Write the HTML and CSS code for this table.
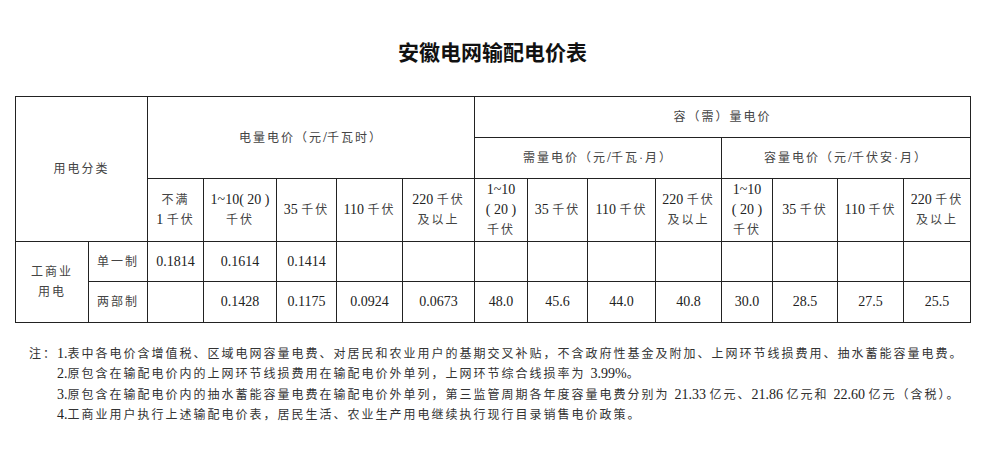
FILE: index.html
```html
<!DOCTYPE html>
<html lang="zh-CN">
<head>
<meta charset="utf-8">
<title>安徽电网输配电价表</title>
<link rel="stylesheet" href="styles.css">
</head>
<body>
<div class="page">
  <h1 class="title">安徽电网输配电价表</h1>
  <table class="price">
    <colgroup>
      <col style="width:73px"><col style="width:59px"><col style="width:56px"><col style="width:73px"><col style="width:60px"><col style="width:66px"><col style="width:72px"><col style="width:53px"><col style="width:60px"><col style="width:68px"><col style="width:66px"><col style="width:51px"><col style="width:65px"><col style="width:66px"><col style="width:67px">
    </colgroup>
    <tr class="r1">
      <td rowspan="3" colspan="2">用电分类</td>
      <td rowspan="2" colspan="5">电量电价（元<span class="n">/</span>千瓦时）</td>
      <td colspan="8">容（需）量电价</td>
    </tr>
    <tr class="r2">
      <td colspan="4">需量电价（元<span class="n">/</span>千瓦·月）</td>
      <td colspan="4">容量电价（元<span class="n">/</span>千伏安·月）</td>
    </tr>
    <tr class="r3">
      <td>不满<br><span class="n">1 </span>千伏</td>
      <td><span class="n">1~10( 20 )</span><br>千伏</td>
      <td><span class="n">35 </span>千伏</td>
      <td><span class="n">110 </span>千伏</td>
      <td><span class="n">220 </span>千伏<br>及以上</td>
      <td><span class="n">1~10<br>( 20 )</span><br>千伏</td>
      <td><span class="n">35 </span>千伏</td>
      <td><span class="n">110 </span>千伏</td>
      <td><span class="n">220 </span>千伏<br>及以上</td>
      <td><span class="n">1~10<br>( 20 )</span><br>千伏</td>
      <td><span class="n">35 </span>千伏</td>
      <td><span class="n">110 </span>千伏</td>
      <td><span class="n">220 </span>千伏<br>及以上</td>
    </tr>
    <tr class="r4">
      <td rowspan="2">工商业<br>用电</td>
      <td>单一制</td>
      <td class="num">0.1814</td>
      <td class="num">0.1614</td>
      <td class="num">0.1414</td>
      <td></td><td></td><td></td><td></td><td></td><td></td><td></td><td></td><td></td><td></td>
    </tr>
    <tr class="r5">
      <td>两部制</td>
      <td></td>
      <td class="num">0.1428</td>
      <td class="num">0.1175</td>
      <td class="num">0.0924</td>
      <td class="num">0.0673</td>
      <td class="num">48.0</td>
      <td class="num">45.6</td>
      <td class="num">44.0</td>
      <td class="num">40.8</td>
      <td class="num">30.0</td>
      <td class="num">28.5</td>
      <td class="num">27.5</td>
      <td class="num">25.5</td>
    </tr>
  </table>
  <div class="notes">
    <div class="label">注：</div>
    <div class="items">
      <p><span class="n">1.</span>表中各电价含增值税、区域电网容量电费、对居民和农业用户的基期交叉补贴，不含政府性基金及附加、上网环节线损费用、抽水蓄能容量电费。</p>
      <p><span class="n">2.</span>原包含在输配电价内的上网环节线损费用在输配电价外单列，上网环节综合线损率为 <span class="n">3.99%</span>。</p>
      <p><span class="n">3.</span>原包含在输配电价内的抽水蓄能容量电费在输配电价外单列，第三监管周期各年度容量电费分别为 <span class="n">21.33 </span>亿元、<span class="n">21.86 </span>亿元和 <span class="n">22.60 </span>亿元（含税）。</p>
      <p><span class="n">4.</span>工商业用户执行上述输配电价表，居民生活、农业生产用电继续执行现行目录销售电价政策。</p>
    </div>
  </div>
</div>
</body>
</html>
```

FILE: styles.css
```css
html, body {
  margin: 0;
  padding: 0;
  background: #fff;
}
body {
  font-family: "Liberation Serif", "Noto Sans CJK SC", serif;
  color: #333;
}
.page {
  width: 955px;
  padding: 38px 0 0 15px;
}
.title {
  margin: 0;
  font-size: 21px;
  line-height: 30px;
  height: 30px;
  font-weight: bold;
  text-align: center;
  color: #111;
}
.price {
  margin-top: 28px;
  width: 955px;
  table-layout: fixed;
  border-collapse: collapse;
  font-size: 12px;
  letter-spacing: 2px;
  line-height: 20px;
}
.price td {
  border: 1px solid #222;
  padding: 0;
  text-align: center;
  vertical-align: middle;
  color: #444;
}
.price .r1 { height: 41px; }
.price .r2 { height: 41px; }
.price .r3 { height: 63px; }
.price .r4 { height: 40px; }
.price .r5 { height: 41px; }
.n {
  font-size: 14px;
  letter-spacing: 0;
  color: #222;
}
.price td.num {
  font-size: 14px;
  letter-spacing: 0;
  color: #222;
}
.notes {
  display: flex;
  margin: 21px 0 0 14px;
  font-size: 12px;
  letter-spacing: 2px;
  line-height: 20.3px;
  color: #333;
}
.label {
  flex: none;
}
.items p {
  margin: 0;
  white-space: nowrap;
}
```
